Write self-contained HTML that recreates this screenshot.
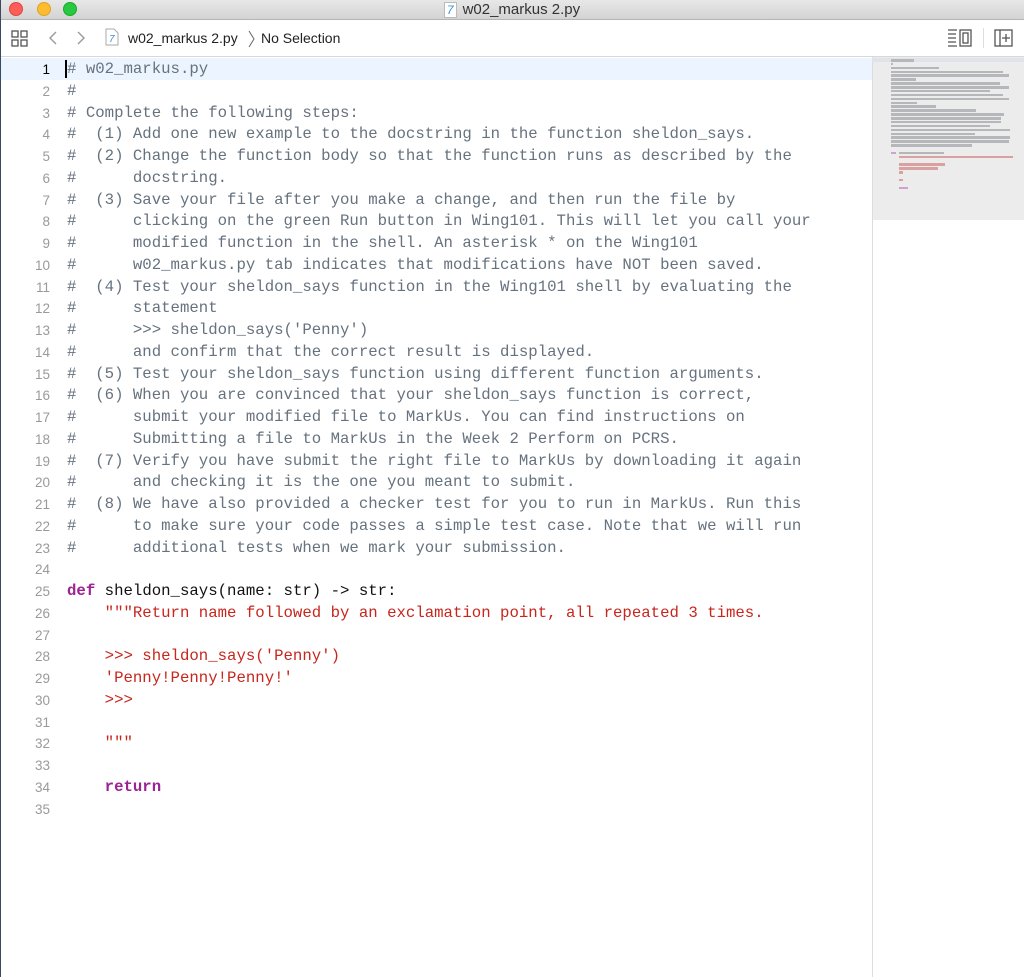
<!DOCTYPE html>
<html><head><meta charset="utf-8"><style>
*{margin:0;padding:0;box-sizing:border-box}
body{width:1024px;height:977px;overflow:hidden;background:#fff;font-family:"Liberation Sans",sans-serif;position:relative}
#title{position:absolute;left:0;top:0;width:1024px;height:20px;background:linear-gradient(#e8e8e8,#d3d3d3);border-bottom:1px solid #b5b5b5;text-align:center;font-size:15px;color:#333;line-height:19px}
.dot{position:absolute;top:2px;width:14px;height:14px;border-radius:50%}
#tb{position:absolute;left:0;top:20px;width:1024px;height:37px;background:#fff;border-bottom:1px solid #d8d8d8;font-size:14px;color:#222}
#code{position:absolute;left:0;top:59px;width:872px;font-family:"Liberation Mono",monospace;font-size:15.7px;line-height:21.76px;color:#66727e}
.r{height:21.76px;position:relative}
.n{position:absolute;left:0;width:50px;text-align:right;color:#9a9a9a;font-family:"Liberation Sans",sans-serif;font-size:13.5px}
.t{position:absolute;left:67px;white-space:pre}
.k{color:#9b2393;font-weight:bold}
.p{color:#111}
.s{color:#c8261d}
#mm{position:absolute;left:872px;top:57px;width:152px;height:163px;background:#ececec}
#div{position:absolute;left:872px;top:57px;width:1px;height:920px;background:#ddd}
.b{position:absolute;height:2.5px;background:#b5b7ba}
</style></head><body>
<div style="position:absolute;left:0;top:0;width:1px;height:977px;background:#3a4a60;z-index:5"></div>
<div id="title">
<div class="dot" style="left:9px;background:#fc5f57;border:1px solid #e0443e"></div>
<div class="dot" style="left:37px;background:#fdbc2e;border:1px solid #dea123"></div>
<div class="dot" style="left:63px;background:#28c840;border:1px solid #1aab29"></div>
<span style="color:#3b8fdc;font-size:12px;border:1px solid #bbb;background:#fff;padding:0 2px;margin-right:6px;font-style:italic">7</span>w02_markus 2.py</div>
<div id="tb">
<svg style="position:absolute;left:11px;top:10px" width="18" height="17" fill="none" stroke="#555" stroke-width="1.3"><rect x="1" y="1" width="6" height="6"/><rect x="10" y="1" width="6" height="6"/><rect x="1" y="10" width="6" height="6"/><rect x="10" y="10" width="6" height="6"/></svg>
<svg style="position:absolute;left:48px;top:11px" width="10" height="14" fill="none" stroke="#999" stroke-width="1.4"><path d="M8 1L2 7L8 13"/></svg>
<svg style="position:absolute;left:76px;top:11px" width="10" height="14" fill="none" stroke="#999" stroke-width="1.4"><path d="M2 1L8 7L2 13"/></svg>
<svg style="position:absolute;left:105px;top:8px" width="14" height="18"><path d="M1 1H9L13 5V17H1Z" fill="#fff" stroke="#aaa"/><text x="4" y="14" font-size="10" fill="#3b8fdc" font-style="italic" font-family="Liberation Sans">7</text></svg>
<span style="position:absolute;left:128px;top:10px">w02_markus 2.py</span>
<svg style="position:absolute;left:248px;top:10px" width="8" height="18" fill="none" stroke="#666"><path d="M1 1L6 9L1 17"/></svg>
<span style="position:absolute;left:261px;top:10px">No Selection</span>
<svg style="position:absolute;left:947px;top:9px" width="26" height="18" fill="none" stroke="#555" stroke-width="1.3"><path d="M1 1H10M1 5H9M1 9H9M1 13H9M1 17H10"/><rect x="13" y="1" width="11" height="16"/><rect x="16" y="4" width="5" height="10"/></svg>
<div style="position:absolute;left:983px;top:8px;width:1px;height:20px;background:#ddd"></div>
<svg style="position:absolute;left:994px;top:9px" width="19" height="18" fill="none" stroke="#555" stroke-width="1.3"><rect x="1" y="1" width="17" height="16"/><path d="M6 1V17M12 5V13M8 9H16"/></svg>
</div>
<div style="position:absolute;left:0;top:58px;width:872px;height:22px;background:#ecf5ff"></div>
<div id="mm"></div><div id="div"></div>
<div style="position:absolute;left:872px;top:58px;width:152px;height:4px;background:#e0e4ea"></div>
<div id="code"><div class="r"><span class="n" style="color:#000">1</span><span class="t"><span style="border-left:2px solid #000;margin-left:-2px"></span># w02_markus.py</span></div><div class="r"><span class="n">2</span><span class="t">#</span></div><div class="r"><span class="n">3</span><span class="t"># Complete the following steps:</span></div><div class="r"><span class="n">4</span><span class="t">#  (1) Add one new example to the docstring in the function sheldon_says.</span></div><div class="r"><span class="n">5</span><span class="t">#  (2) Change the function body so that the function runs as described by the</span></div><div class="r"><span class="n">6</span><span class="t">#      docstring.</span></div><div class="r"><span class="n">7</span><span class="t">#  (3) Save your file after you make a change, and then run the file by</span></div><div class="r"><span class="n">8</span><span class="t">#      clicking on the green Run button in Wing101. This will let you call your</span></div><div class="r"><span class="n">9</span><span class="t">#      modified function in the shell. An asterisk * on the Wing101</span></div><div class="r"><span class="n">10</span><span class="t">#      w02_markus.py tab indicates that modifications have NOT been saved.</span></div><div class="r"><span class="n">11</span><span class="t">#  (4) Test your sheldon_says function in the Wing101 shell by evaluating the</span></div><div class="r"><span class="n">12</span><span class="t">#      statement</span></div><div class="r"><span class="n">13</span><span class="t">#      &gt;&gt;&gt; sheldon_says('Penny')</span></div><div class="r"><span class="n">14</span><span class="t">#      and confirm that the correct result is displayed.</span></div><div class="r"><span class="n">15</span><span class="t">#  (5) Test your sheldon_says function using different function arguments.</span></div><div class="r"><span class="n">16</span><span class="t">#  (6) When you are convinced that your sheldon_says function is correct,</span></div><div class="r"><span class="n">17</span><span class="t">#      submit your modified file to MarkUs. You can find instructions on</span></div><div class="r"><span class="n">18</span><span class="t">#      Submitting a file to MarkUs in the Week 2 Perform on PCRS.</span></div><div class="r"><span class="n">19</span><span class="t">#  (7) Verify you have submit the right file to MarkUs by downloading it again</span></div><div class="r"><span class="n">20</span><span class="t">#      and checking it is the one you meant to submit.</span></div><div class="r"><span class="n">21</span><span class="t">#  (8) We have also provided a checker test for you to run in MarkUs. Run this</span></div><div class="r"><span class="n">22</span><span class="t">#      to make sure your code passes a simple test case. Note that we will run</span></div><div class="r"><span class="n">23</span><span class="t">#      additional tests when we mark your submission.</span></div><div class="r"><span class="n">24</span></div><div class="r"><span class="n">25</span><span class="t"><span class="k">def</span><span class="p"> sheldon_says(name: str) -&gt; str:</span></span></div><div class="r"><span class="n">26</span><span class="t s">    """Return name followed by an exclamation point, all repeated 3 times.</span></div><div class="r"><span class="n">27</span></div><div class="r"><span class="n">28</span><span class="t s">    &gt;&gt;&gt; sheldon_says('Penny')</span></div><div class="r"><span class="n">29</span><span class="t s">    'Penny!Penny!Penny!'</span></div><div class="r"><span class="n">30</span><span class="t s">    &gt;&gt;&gt;</span></div><div class="r"><span class="n">31</span></div><div class="r"><span class="n">32</span><span class="t s">    """</span></div><div class="r"><span class="n">33</span></div><div class="r"><span class="n">34</span><span class="t"><span class="k">    return</span></span></div><div class="r"><span class="n">35</span></div></div>
<div id="bars"></div>
<script>
var L=[15,1,31,72,76,16,70,76,64,72,76,17,29,55,73,71,71,64,77,54,77,76,52];
var h='';
for(var i=0;i<L.length;i++){h+='<div class="b" style="left:891px;top:'+(59+i*3.87)+'px;width:'+(L[i]*1.55)+'px"></div>';}
var C=[[25,0,3,'#d0a0d0'],[25,5,29,'#b5b7ba'],[26,5,74,'#dba0a0'],[28,5,30,'#dba0a0'],[29,5,25,'#dba0a0'],[30,5,3,'#dba0a0'],[32,5,3,'#dba0a0'],[34,5,6,'#d0a0d0']];
C.forEach(function(c){h+='<div class="b" style="background:'+c[3]+';left:'+(891+c[1]*1.55)+'px;top:'+(59+(c[0]-1)*3.87)+'px;width:'+(c[2]*1.55)+'px"></div>';});
document.getElementById('bars').innerHTML=h;
</script>
</body></html>
